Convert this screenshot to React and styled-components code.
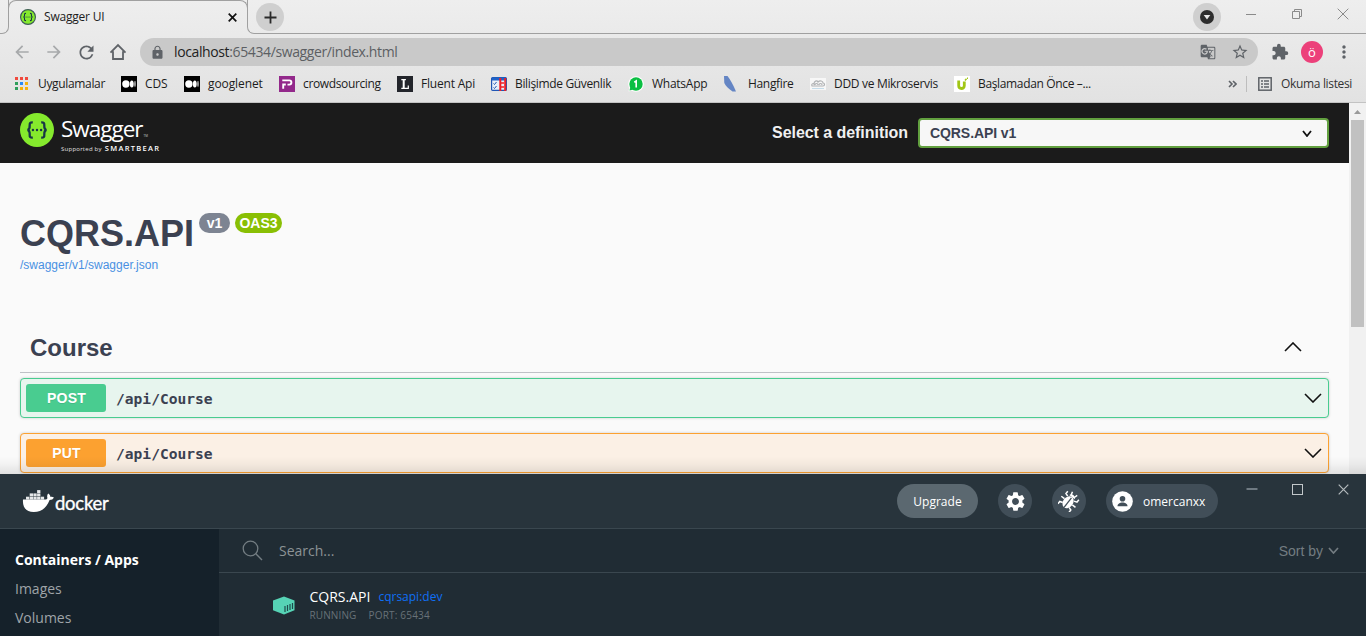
import React from "react";
import styled, { createGlobalStyle } from "styled-components";
import {
  MdArrowBack, MdArrowForward, MdRefresh, MdLock, MdStarBorder,
  MdExtension, MdMoreVert, MdGTranslate, MdSettings,
} from "react-icons/md";

const ui = `"Open Sans", "Noto Sans", sans-serif`;
const arial = `"Liberation Sans", Arial, sans-serif`;

const Global = createGlobalStyle`
  * { box-sizing: border-box; }
  html, body { margin: 0; padding: 0; }
  body { overflow: hidden; font-family: ${ui}; }
  svg { display: block; flex: none; }
`;

const Screen = styled.div`
  width: 1366px; height: 636px; overflow: hidden;
  display: flex; flex-direction: column;
`;

/* ---------- text ---------- */
const Label = styled.span`
  display: block; flex: none; white-space: nowrap;
  font-family: ${(p) => p.$font || ui};
  font-size: ${(p) => p.$size || 12}px;
  font-weight: ${(p) => p.$weight || 400};
  letter-spacing: ${(p) => p.$track || 0}px;
  color: ${(p) => p.$color || "#1c1c1c"};
  line-height: ${(p) => p.$line || 16}px;
`;

/* ---------- browser ---------- */
const Browser = styled.header`
  height: 103px; flex: none; display: flex; flex-direction: column;
  background: linear-gradient(#eeeeee, #e2e2e2);
  border-bottom: 1px solid #c3c3c3;
`;
const TabStrip = styled.div`
  height: 34px; flex: none; display: flex; align-items: flex-start;
`;
const StripEdge = styled.div`
  height: 34px; border-bottom: 1px solid #a0a0a0;
  width: ${(p) => p.$w}px; flex: ${(p) => (p.$grow ? 1 : "none")};
  ${(p) => p.$side === "left" && "border-right: 1px solid #a0a0a0; border-bottom-right-radius: 7px; margin-right: -1px;"}
  ${(p) => p.$side === "right" && "border-left: 1px solid #a0a0a0; border-bottom-left-radius: 7px; margin-left: -1px;"}
  display: flex; justify-content: space-between; align-items: flex-start;
`;
const Tab = styled.div`
  width: 240px; height: 27px; padding: 8px 10px 0 11px;
  border: 1px solid #a0a0a0; border-bottom: 0; border-radius: 8px 8px 0 0;
  display: flex; align-items: flex-start; gap: 8px;
`;
const TabClose = styled.div`margin: 4px 0 0 auto;`;
const Round = styled.div`
  width: 28px; height: 28px; border-radius: 50%; background: #cfcfcf;
  display: flex; align-items: center; justify-content: center; margin-top: 3px;
`;
const PlusRound = styled(Round)`margin-left: 8px;`;
const WindowButtons = styled.div`
  display: flex; align-items: flex-start; gap: 34px; padding: 8px 17px 0 0;
`;
const StripRight = styled.div`display: flex; gap: 24px;`;
const Toolbar = styled.div`
  height: 37px; flex: none; display: flex; align-items: center;
  padding: 0 12px 1px 6px;
`;
const NavIcons = styled.div`
  width: 134px; display: grid; grid-template-columns: repeat(4, 32px);
  place-items: center; color: #5f6368;
`;
const Address = styled.div`
  width: 1118px; height: 28px; border-radius: 14px; background: #c9c9c9;
  display: flex; align-items: center; padding: 0 9px 0 10px; color: #5f6368;
`;
const AddressText = styled.div`
  margin-left: 9px; display: flex; flex: 1;
`;
const AddressIcons = styled.div`display: flex; gap: 15px; align-items: center;`;
const ToolbarEnd = styled.div`
  flex: 1; display: flex; align-items: center; justify-content: flex-end; color: #5f6368;
`;
const Avatar = styled.div`
  width: 22px; height: 22px; border-radius: 50%; background: #ec407a;
  display: flex; align-items: center; justify-content: center; margin: 0 11px 0 12px;
`;
const Bookmarks = styled.nav`
  flex: 1; display: flex; align-items: center; padding: 0 14px 5px 14px;
`;
const BookmarkItem = styled.div`
  width: ${(p) => p.$w}px; flex: none; display: flex; align-items: center; gap: 8px;
`;
const BookmarksEnd = styled.div`
  margin-left: auto; display: flex; align-items: center;
`;
const Separator = styled.div`
  width: 1px; height: 16px; background: #bdbdbd; margin: 0 11px 0 9px;
`;

/* ---------- swagger ---------- */
const Viewport = styled.main`
  height: 371px; flex: none; display: flex; background: #fafafa; position: relative; overflow: hidden;
`;
const WindowShadow = styled.div`
  position: absolute; left: 0; right: 0; bottom: 0; height: 18px;
  background: linear-gradient(rgba(0,0,0,0), rgba(0,0,0,0.03) 45%, rgba(0,0,0,0.1));
`;
const Page = styled.div`width: 1349px; display: flex; flex-direction: column;`;
const Scrollbar = styled.div`
  width: 17px; background: #f1f1f1; display: flex; flex-direction: column;
  align-items: center; padding-top: 7px; gap: 6px;
`;
const Thumb = styled.div`width: 13px; height: 207px; background: #c1c1c1;`;
const Topbar = styled.div`
  height: 60px; flex: none; background: #1b1b1b; padding: 0 20px;
  display: flex; align-items: center; justify-content: space-between;
`;
const Brand = styled.div`
  display: flex; gap: 7px; height: 60px; padding-top: 10px; align-items: flex-start;
`;
const BrandText = styled.div`display: flex; flex-direction: column; padding-top: 2px;`;
const BrandRow = styled.div`display: flex; align-items: baseline; gap: ${(p) => p.$gap}px; margin-top: ${(p) => p.$top || 0}px;`;
const Definition = styled.div`display: flex; align-items: center; gap: 10px;`;
const Select = styled.div`
  width: 411px; height: 30px; border: 2px solid #62a03f; border-radius: 4px;
  background: #f7f7f7; display: flex; align-items: center;
  justify-content: space-between; padding: 0 15px 0 10px;
`;
const Info = styled.section`
  height: 162px; flex: none; padding: 50px 20px 0;
`;
const TitleRow = styled.div`display: flex; align-items: flex-start;`;
const Badge = styled.div`
  height: 20px; width: ${(p) => p.$w}px; border-radius: 10px; background: ${(p) => p.$bg};
  display: flex; align-items: center; justify-content: center; margin: 0 0 0 5px;
`;
const TagHeader = styled.div`
  height: 48px; margin: 0 20px 5px; border-bottom: 1px solid #bfc1c6; flex: none;
  display: flex; align-items: center; justify-content: space-between;
  padding: 0 27px 3px 10px;
`;
const TagName = styled.div`padding-top: 1px;`;
const Operation = styled.div`
  height: 40px; flex: none; margin: 0 20px 15px; border: 1px solid ${(p) => p.$c};
  border-radius: 4px; background: ${(p) => p.$bg}; box-shadow: 0 0 3px rgba(0,0,0,0.19);
  display: flex; align-items: center; padding: 0 6px 0 5px; gap: 10px;
`;
const Method = styled.div`
  width: 80px; height: 28px; border-radius: 3px; background: ${(p) => p.$c};
  display: flex; align-items: center; justify-content: center; padding-left: 1px;
  text-shadow: 0 1px 0 rgba(0,0,0,0.1);
`;
const Path = styled.div`flex: 1; padding-top: 2px;`;

/* ---------- docker ---------- */
const Docker = styled.section`
  height: 162px; flex: none; display: flex; flex-direction: column; background: #202c34;
`;
const DockerHeader = styled.div`
  height: 55px; flex: none; background: #28343c; border-bottom: 1px solid #3a474f;
  display: flex; align-items: flex-start; justify-content: space-between;
  padding: 0 17px 0 22px;
`;
const DockerBrand = styled.div`display: flex; gap: 1px; padding-top: 15px;`;
const DockerWord = styled(Label)`-webkit-text-stroke: 0.35px #fff;`;
const DockerActions = styled.div`display: flex; padding-top: 10px;`;
const Pill = styled.div`
  height: 34px; width: ${(p) => p.$w}px; border-radius: 17px; background: ${(p) => p.$bg || "#414e58"};
  display: flex; align-items: center; justify-content: ${(p) => (p.$start ? "flex-start" : "center")};
  gap: 10px; margin-right: 20px; padding-left: ${(p) => (p.$start ? 6 : 0)}px;
`;
const PillText = styled(Label)`padding-top: 2px;`;
const DockerWindow = styled.div`
  display: flex; gap: 34px; margin-left: 8px;
`;
const DockerBody = styled.div`flex: 1; display: flex;`;
const Sidebar = styled.div`
  width: 219px; background: #15212a; padding: 17px 15px 0;
  display: flex; flex-direction: column; gap: 1px;
`;
const Main = styled.div`flex: 1; display: flex; flex-direction: column;`;
const SearchBar = styled.div`
  height: 44px; border-bottom: 1px solid #3a474f; padding: 0 27px 0 23px;
  display: flex; align-items: center; justify-content: space-between;
`;
const Inline = styled.div`display: flex; align-items: center; gap: ${(p) => p.$gap}px;`;
const ContainerRow = styled.div`display: flex; padding: 15px 0 0 54px; gap: 14.5px;`;
const ContainerIcon = styled.div`padding-top: 8px;`;
const ContainerText = styled.div`display: flex; flex-direction: column; gap: 1px;`;

/* ---------- drawings ---------- */
const Svg = ({ w, h = w, vb, children, ...rest }) => (
  <svg width={w} height={h} viewBox={vb || `0 0 ${w} ${h}`} fill="none" {...rest}>{children}</svg>
);
const SwaggerMark = ({ size, ring }) => (
  <Svg w={size} vb="0 0 34 34">
    <circle cx="17" cy="17" r={ring ? 15.8 : 17} fill="#85ea2d" stroke={ring ? "#3d5d55" : "none"} strokeWidth="2.4" />
    <path d="M12.8 9.3c-2.8-.1-3.2.8-3.1 3 .1 2.600-.1 4.300-2.200 4.700 2.100.4 2.300 2.100 2.200 4.700-.1 2.200.3 3.100 3.100 3M21.200 9.300c2.800-.1 3.200.8 3.100 3-.1 2.600.1 4.300 2.200 4.700-2.100.4-2.300 2.100-2.200 4.700.1 2.200-.3 3.100-3.100 3" stroke="#173647" strokeWidth="2.3" />
    <circle cx="12.900" cy="17" r="1.200" fill="#173647" /><circle cx="17" cy="17" r="1.200" fill="#173647" /><circle cx="21.100" cy="17" r="1.200" fill="#173647" />
  </Svg>
);
const HomeIcon = () => (
  <Svg w={18}><path d="M1.500 9.700L9 2l7.500 7.700M4 8.200V16h10V8.200" stroke="#5f6368" strokeWidth="1.800" /></Svg>
);
const AppsIcon = () => {
  const c = ["#f04a3e", "#f04a3e", "#f04a3e", "#2f9e5b", "#2a8af6", "#f7b10a", "#2f9e5b", "#f7b10a", "#f7b10a"];
  return <Svg w={16}>{c.map((f, i) => <rect key={i} x={1 + (i % 3) * 5} y={1 + Math.floor(i / 3) * 5} width="3" height="3" fill={f} />)}</Svg>;
};
const MediumIcon = () => (
  <Svg w={16}><rect width="16" height="16" fill="#000" /><circle cx="4.900" cy="8" r="3.700" fill="#fff" />
    <ellipse cx="10.800" cy="8" rx="1.900" ry="3.500" fill="#fff" /><ellipse cx="14" cy="8" rx=".8" ry="3.200" fill="#bbb" /></Svg>
);
const CrowdIcon = () => (
  <Svg w={16}><rect width="16" height="16" fill="#93298b" />
    <path d="M3.300 4.400h7a2 2 0 0 1 0 4.200H8.500M4.200 12.700V8.500h2.600" stroke="#fff" strokeWidth="1.900" /></Svg>
);
const LIcon = () => (
  <Svg w={16}><rect width="16" height="16" fill="#23252b" />
    <path d="M4.300 3.600h4.600M4.300 12.400h7V9.500" stroke="#fff" strokeWidth="1.200" /><path d="M6.700 3.500v9" stroke="#fff" strokeWidth="2" /></Svg>
);
const ListsIcon = () => (
  <Svg w={16}><rect x=".6" y="1.600" width="14.800" height="12.800" rx="1" fill="#e8effa" stroke="#1f56b5" strokeWidth="1.200" />
    <rect x="1" y="1.500" width="14" height="3" fill="#1f62c8" />
    <path d="M2.500 7.500l1 1 2-2.500M2.500 11.500l1 1 2-2.500" stroke="#1f56b5" /><path d="M9.300 2v13M14.200 2v13" stroke="#ee1f25" strokeWidth="2" /><path d="M10 7h3M10 11h3" stroke="#ee1f25" strokeWidth="1.300" /></Svg>
);
const WhatsIcon = () => (
  <Svg w={16}><circle cx="8" cy="8" r="7.800" fill="#fff" /><path d="M.5 15.500L2 10l4 4z" fill="#fff" />
    <circle cx="8" cy="8" r="6.700" fill="#0bbf43" /><path d="M1.500 14.500l1-4 3 3z" fill="#0bbf43" />
    <path d="M6.300 6.200L8.200 5v6.500" stroke="#fff" strokeWidth="1.600" /></Svg>
);
const HangfireIcon = () => (
  <Svg w={16}><path d="M0 0h3.500C6 3 9 8.500 12 15.500H8.500C5 13 1.500 10 .3 7z" fill="#6485c4" /></Svg>
);
const CloudIcon = () => (
  <Svg w={16}><rect y="2" width="16" height="12" fill="#f7f7f7" />
    <path d="M2 10c-1-2 1-3 2-2 0-3 3-4 4-2 2-2 5-1 5 1 2 0 2 3 0 3zM5 9c0-2 3-2 3 0M9 9c0-2 3-2 3 0" stroke="#b0b2b4" strokeWidth="1.200" />
    <path d="M2 12.500h12" stroke="#c5dcea" /></Svg>
);
const UIcon = () => (
  <Svg w={16}><rect width="16" height="16" fill="#fff" />
    <path d="M4.700 4.500v5.300c0 3.600 5.600 3.600 5.600 0V5.500" stroke="#a1c614" strokeWidth="2.800" />
    <path d="M11 4.500l1.500-1.800M13 2.200h1" stroke="#a1c614" strokeWidth="1.500" /></Svg>
);
const Whale = () => (
  <Svg w={32} h={24}>
    <path d="M1 10.500h23c1.200-.3 1.600-1 1.300-2-.4-1.500 0-2.800.9-4 1.600 1 2.200 2.200 2.200 3.500 1.200-.3 2.500-.1 3.500.5-.7 1.700-2.300 2.500-4.300 2.500C24.500 18.800 19.700 23 11.700 23 4.500 23 .3 18.700 1 10.500z" fill="#fff" />
    {[[4, 7.700], [7.700, 7.700], [11.400, 7.700], [15.100, 7.700], [18.800, 7.700], [7.700, 4.400], [11.400, 4.400], [15.100, 4.400], [15.100, 1.100]].map(([x, y]) => (
      <rect key={`${x}-${y}`} x={x} y={y} width="3.300" height="2.900" fill="#e6e8e9" />
    ))}
  </Svg>
);
const Bug = () => (
  <Svg w={22} vb="0 0 22 22">
    <g transform="rotate(38 11 11)" stroke="#fff" strokeWidth="1.500">
      <path d="M7 8L4 7V4M15 8l3-1V4M6 12H2M16 12h4M7 16l-3 1v3M15 16l3 1v3M9 5L8 1.500M13 5l1-3.500" />
      <ellipse cx="11" cy="12.500" rx="5" ry="6.500" fill="#fff" stroke="none" />
      <path d="M7.500 6a3.600 3.200 0 0 1 7 0z" fill="#fff" stroke="none" />
      <path d="M11 7v12" stroke="#414e58" strokeWidth="1.300" />
    </g>
  </Svg>
);
const Chevron = ({ w, h, color = "#111", sw = 1.6, up }) => (
  <Svg w={w} h={h}><path d={up ? `M1 ${h - 1}L${w / 2} 1L${w - 1} ${h - 1}` : `M1 1L${w / 2} ${h - 1}L${w - 1} 1`} stroke={color} strokeWidth={sw} /></Svg>
);
const Cross = ({ s, color, sw }) => (
  <Svg w={s}><path d={`M.7 .7L${s - 0.7} ${s - 0.7}M${s - 0.7} .7L.7 ${s - 0.7}`} stroke={color} strokeWidth={sw} /></Svg>
);

const bookmarks = [
  ["Uygulamalar", AppsIcon, 107, -0.34], ["CDS", MediumIcon, 63, -0.1], ["googlenet", MediumIcon, 95, -0.1],
  ["crowdsourcing", CrowdIcon, 118, -0.36], ["Fluent Api", LIcon, 94, -0.2], ["Bilişimde Güvenlik", ListsIcon, 137, -0.35],
  ["WhatsApp", WhatsIcon, 96, -0.26], ["Hangfire", HangfireIcon, 86, -0.33], ["DDD ve Mikroservis", CloudIcon, 144, -0.31],
  ["Başlamadan Önce –...", UIcon, 150, -0.35],
];

const operations = [
  ["POST", "#49cc90", "#e7f5ee"],
  ["PUT", "#fca130", "#fbf0e5"],
];

export default function App() {
  return (
    <Screen>
      <Global />
      <Browser>
        <TabStrip>
          <StripEdge $w={9} $side="left" />
          <Tab>
            <SwaggerMark size={16} ring />
            <Label $track={-0.2}>Swagger UI</Label>
            <TabClose><Cross s={9} color="#111" sw={1.7} /></TabClose>
          </Tab>
          <StripEdge $grow $side="right">
            <PlusRound>
              <Svg w={13}><path d="M6.500 .5v12M.5 6.500h12" stroke="#2a2a2a" strokeWidth="1.800" /></Svg>
            </PlusRound>
            <StripRight>
              <Round>
                <Svg w={14}><circle cx="7" cy="7" r="7" fill="#2d2d2d" /><path d="M3.700 5h6.600L7 9.600z" fill="#e8e8e8" /></Svg>
              </Round>
              <WindowButtons>
                <Svg w={12}><path d="M1 6.500h10" stroke="#8a8a8a" /></Svg>
                <Svg w={12}><path d="M1.500 3.500h7v7h-7zM3.500 3V1.500h7v7H9" stroke="#8a8a8a" /></Svg>
                <Cross s={12} color="#8a8a8a" sw={1} />
              </WindowButtons>
            </StripRight>
          </StripEdge>
        </TabStrip>
        <Toolbar>
          <NavIcons>
            <MdArrowBack size={20} color="#a7a9ab" />
            <MdArrowForward size={20} color="#a7a9ab" />
            <MdRefresh size={21} />
            <HomeIcon />
          </NavIcons>
          <Address>
            <MdLock size={15} />
            <AddressText>
              <Label $size={14} $line={20} $track={-0.38} $color="#222">localhost</Label>
              <Label $size={14} $line={20} $track={-0.38} $color="#5c5f63">:65434/swagger/index.html</Label>
            </AddressText>
            <AddressIcons>
              <MdGTranslate size={16} />
              <MdStarBorder size={18} />
            </AddressIcons>
          </Address>
          <ToolbarEnd>
            <MdExtension size={18} />
            <Avatar><Label $size={13} $color="#fff">ö</Label></Avatar>
            <MdMoreVert size={20} />
          </ToolbarEnd>
        </Toolbar>
        <Bookmarks>
          {bookmarks.map(([name, Icon, w, t]) => (
            <BookmarkItem key={name} $w={w}><Icon /><Label $track={t}>{name}</Label></BookmarkItem>
          ))}
          <BookmarksEnd>
            <Svg w={9} h={8}><path d="M1 1l3 3-3 3M5 1l3 3-3 3" stroke="#5f6368" strokeWidth="1.600" /></Svg>
            <Separator />
            <Inline $gap={9}>
              <Svg w={14}><rect x=".8" y=".8" width="12.400" height="12.400" stroke="#5f6368" strokeWidth="1.500" />
                <path d="M3 4h2M3 7h2M3 10h2M6 4h5M6 7h5M6 10h5" stroke="#5f6368" strokeWidth="1.300" /></Svg>
              <Label $track={-0.35} $color="#333">Okuma listesi</Label>
            </Inline>
          </BookmarksEnd>
        </Bookmarks>
      </Browser>

      <Viewport>
        <Page>
          <Topbar>
            <Brand>
              <SwaggerMark size={34} />
              <BrandText>
                <BrandRow $gap={1}>
                  <Label $size={22.5} $line={28} $track={-1} $color="#fff">Swagger</Label>
                  <Label $size={3} $line={4} $color="#ccc">TM</Label>
                </BrandRow>
                <BrandRow $gap={3} $top={1}>
                  <Label $size={6} $line={8} $track={0.25} $color="#e0e0e0">Supported by</Label>
                  <Label $size={7.5} $line={8} $weight={600} $track={1.3} $color="#fff">SMARTBEAR</Label>
                </BrandRow>
              </BrandText>
            </Brand>
            <Definition>
              <Label $font={arial} $size={16} $weight={700} $track={-0.05} $color="#f0f0f0">Select a definition</Label>
              <Select>
                <Label $font={arial} $size={14} $weight={700} $track={-0.08} $color="#3b4151">CQRS.API v1</Label>
                <Chevron w={10} h={7} sw={1.8} />
              </Select>
            </Definition>
          </Topbar>
          <Info>
            <TitleRow>
              <Label $font={arial} $size={36} $line={42} $weight={700} $color="#3b4151">CQRS.API</Label>
              <Badge $w={31} $bg="#7d8492"><Label $font={arial} $size={14} $weight={700} $color="#fff">v1</Label></Badge>
              <Badge $w={47} $bg="#89bf04"><Label $font={arial} $size={14} $weight={700} $color="#fff">OAS3</Label></Badge>
            </TitleRow>
            <Label $font={arial} $size={12} $line={20} $color="#4990e2">/swagger/v1/swagger.json</Label>
          </Info>
          <TagHeader>
            <TagName><Label $font={arial} $size={24} $line={28} $weight={700} $color="#3b4151">Course</Label></TagName>
            <Chevron w={18} h={10} up />
          </TagHeader>
          {operations.map(([m, c, bg]) => (
            <Operation key={m} $c={c} $bg={bg}>
              <Method $c={c}><Label $font={arial} $size={14} $weight={700} $track={0.2} $color="#fff">{m}</Label></Method>
              <Path><Label $font={`"DejaVu Sans Mono", monospace`} $size={14.6} $weight={700} $color="#3b4151">/api/Course</Label></Path>
              <Chevron w={18} h={10} />
            </Operation>
          ))}
        </Page>
        <Scrollbar>
          <Svg w={7} h={4}><path d="M0 4L3.500 0L7 4z" fill="#999" /></Svg>
          <Thumb />
        </Scrollbar>
        <WindowShadow />
      </Viewport>

      <Docker>
        <DockerHeader>
          <DockerBrand>
            <Whale />
            <DockerWord $font={`Lato, sans-serif`} $size={18.5} $line={28} $track={-0.25} $color="#fff">docker</DockerWord>
          </DockerBrand>
          <DockerActions>
            <Pill $w={81} $bg="#5b6870"><PillText $color="#fff">Upgrade</PillText></Pill>
            <Pill $w={34}><MdSettings size={23} color="#fff" /></Pill>
            <Pill $w={34}><Bug /></Pill>
            <Pill $w={112} $start>
              <Svg w={21}><circle cx="10.500" cy="10.500" r="10.300" fill="#fff" /><circle cx="10.500" cy="7.700" r="2.800" fill="#414e58" /><path d="M5.500 15.200c0-5 10-5 10 0z" fill="#414e58" /></Svg>
              <PillText $color="#fff">omercanxx</PillText>
            </Pill>
            <DockerWindow>
              <Svg w={12}><path d="M.5 5h11" stroke="#87929a" strokeWidth="1.500" /></Svg>
              <Svg w={12}><rect x=".5" y=".5" width="10" height="10" stroke="#c2c7ca" /></Svg>
              <Cross s={11} color="#b4babd" sw={1.2} />
            </DockerWindow>
          </DockerActions>
        </DockerHeader>
        <DockerBody>
          <Sidebar>
            <Label $size={14} $line={28} $weight={700} $color="#fff">Containers / Apps</Label>
            <Label $size={14} $line={28} $color="#9fa4a8">Images</Label>
            <Label $size={14} $line={28} $color="#9fa4a8">Volumes</Label>
          </Sidebar>
          <Main>
            <SearchBar>
              <Inline $gap={16}>
                <Svg w={21}><circle cx="8.500" cy="8.500" r="7.300" stroke="#737d82" strokeWidth="1.300" /><path d="M13.600 13.600L20 20" stroke="#737d82" strokeWidth="1.400" /></Svg>
                <Label $size={14} $line={20} $color="#8c9396">Search...</Label>
              </Inline>
              <Inline $gap={5}>
                <Label $font={arial} $size={14} $color="#737c81">Sort by</Label>
                <Chevron w={11} h={7} color="#737c81" sw={1.7} />
              </Inline>
            </SearchBar>
            <ContainerRow>
              <ContainerIcon>
                <Svg w={22} h={19}>
                  <path d="M0 4.500L11 .5l10.500 4v9.800L11 18.500 0 14.300z" fill="#56d3b5" />
                  <path d="M12 10v6M14.500 9v6M17 8v6M19.500 7v6" stroke="#1e4b4b" strokeWidth="1.200" />
                </Svg>
              </ContainerIcon>
              <ContainerText>
                <Inline $gap={8}>
                  <Label $size={14} $line={18} $color="#fff">CQRS.API</Label>
                  <Label $size={12} $line={18} $color="#0f6ff5">cqrsapi:dev</Label>
                </Inline>
                <Inline $gap={12}>
                  <Label $size={10} $track={0.12} $color="#687278">RUNNING</Label>
                  <Label $size={10} $track={0.2} $color="#687278">PORT: 65434</Label>
                </Inline>
              </ContainerText>
            </ContainerRow>
          </Main>
        </DockerBody>
      </Docker>
    </Screen>
  );
}
